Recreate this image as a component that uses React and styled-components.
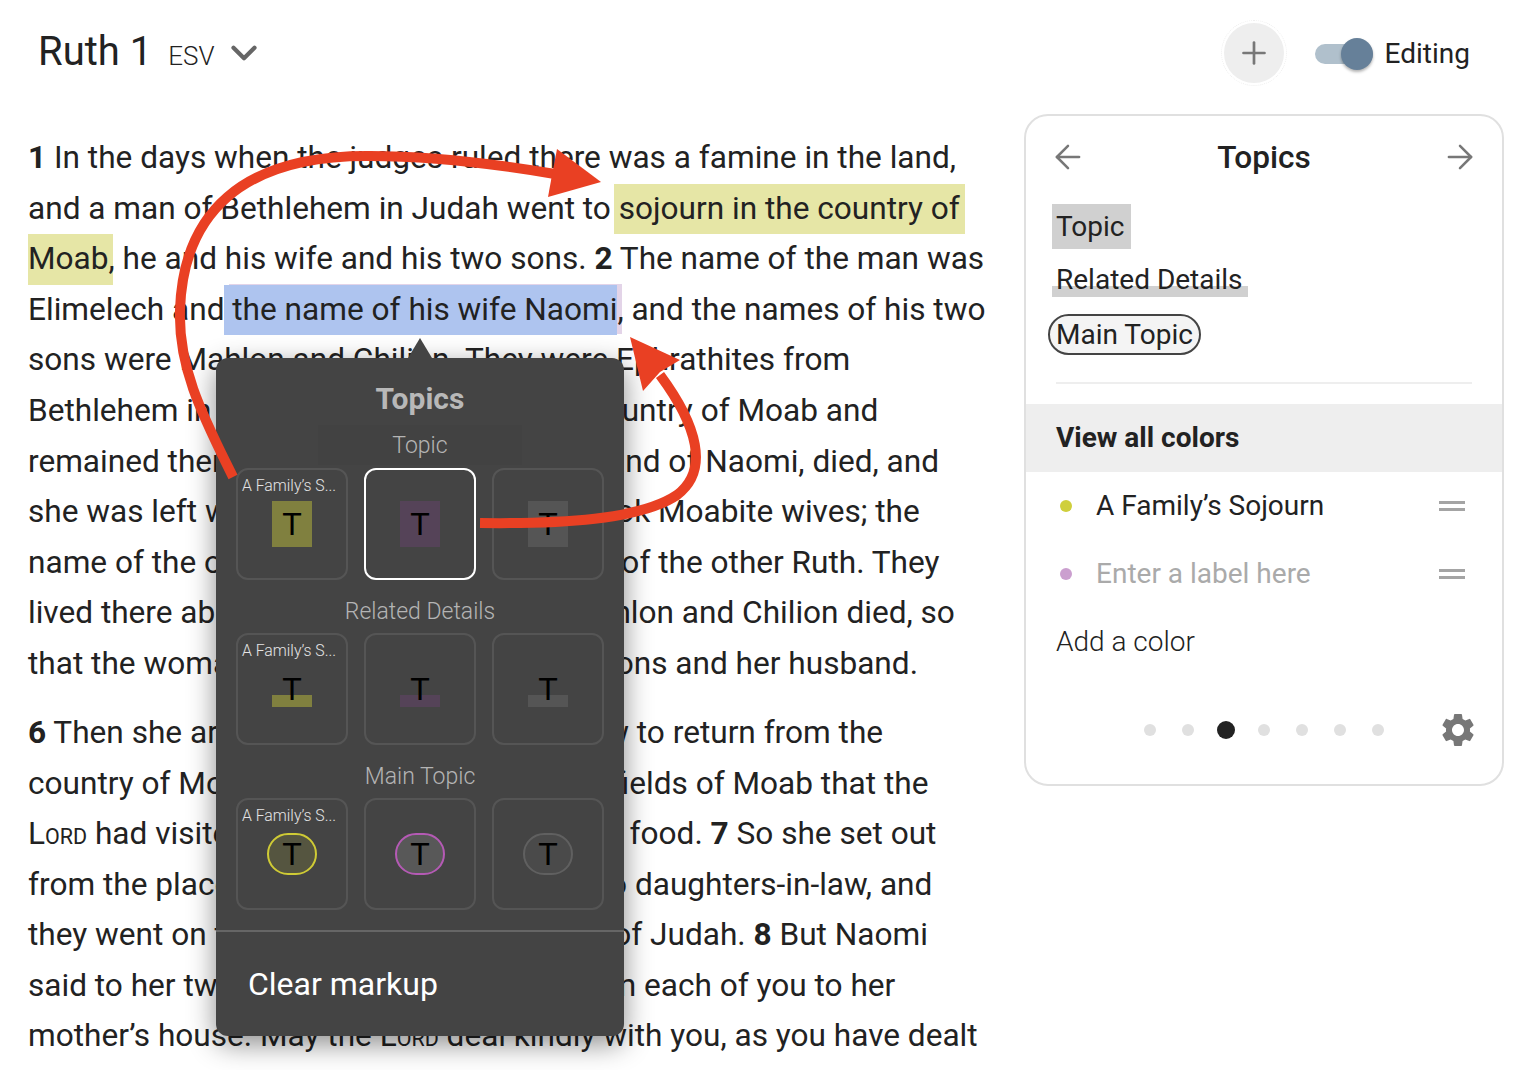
import React from 'react'
import styled, { createGlobalStyle } from 'styled-components'
import { ArrowLeft, ArrowRight, ChevronDown, Plus } from 'lucide-react'
import { MdSettings } from 'react-icons/md'

const GlobalStyle = createGlobalStyle`
  html, body {
    margin: 0;
    padding: 0;
    background: #fff;
  }
  body {
    font-family: Roboto, "Liberation Sans", sans-serif;
    color: #222;
  }
`

const Page = styled.div`
  position: relative;
  width: 1524px;
  height: 1070px;
  overflow: hidden;
`

const Header = styled.header`
  display: flex;
  align-items: center;
  justify-content: space-between;
  height: 105px;
  padding: 0 54px 0 38px;
  box-sizing: border-box;
`

const TitleGroup = styled.div`
  display: flex;
  align-items: baseline;
`

const Title = styled.h1`
  margin: 0;
  font-size: 40px;
  font-weight: 400;
  line-height: 1;
`

const Version = styled.span`
  margin-left: 16px;
  font-size: 26px;
  font-weight: 300;
`

const Chevron = styled(ChevronDown)`
  margin-left: 9px;
  align-self: center;
  color: #666;
`

const HeaderActions = styled.div`
  display: flex;
  align-items: center;
`

const AddButton = styled.button`
  display: flex;
  align-items: center;
  justify-content: center;
  width: 60px;
  height: 60px;
  margin-right: 31px;
  padding: 0;
  border: 0;
  border-radius: 50%;
  background: #eee;
  color: #777;
  outline: 1px dotted #eee;
  outline-offset: 2px;
`

const Toggle = styled.div`
  display: flex;
  align-items: center;
  width: 58px;
  height: 20px;
  border-radius: 10px;
  background: #b0c0cc;
  margin-top: 3px;
`

const Knob = styled.div`
  width: 32px;
  height: 32px;
  margin-left: 26px;
  border-radius: 50%;
  background: #668099;
  box-shadow: 0 2px 3px rgba(0, 0, 0, 0.3);
`

const ToggleLabel = styled.span`
  margin-left: 12px;
  padding-top: 2px;
  font-size: 28px;
`

const Body = styled.main`
  display: flex;
  align-items: flex-start;
`

const Reading = styled.section`
  position: relative;
  width: 1024px;
  padding: 28px 0 0 28px;
  box-sizing: border-box;
  font-size: 31.6px;
`

const Verse = styled.p`
  margin: 0 0 18.4px;
  white-space: nowrap;
`

const Line = styled.span`
  display: block;
  line-height: 50.6px;
  height: 50.6px;
`

const Mark = styled.span`
  display: inline-block;
  padding: 0 ${p => p.$right}px 0 ${p => p.$left}px;
  margin: 0 -${p => p.$right}px 0 -${p => p.$left}px;
  background: ${p => p.$color};
  box-shadow: ${p => p.$shadow || 'none'};
`

const SmallCaps = styled.span`
  font-size: 0.68em;
`

const Lord = () => <span>L<SmallCaps>ORD</SmallCaps></span>

const Popover = styled.div`
  position: absolute;
  top: 253px;
  left: 216px;
  width: 408px;
  height: 678px;
  display: flex;
  flex-direction: column;
  border-radius: 12px;
  background: #444;
  box-shadow: 0 8px 28px rgba(0, 0, 0, 0.45);

  &::before {
    content: '';
    position: absolute;
    top: -20px;
    left: 192px;
    border-left: 12px solid transparent;
    border-right: 12px solid transparent;
    border-bottom: 20px solid #444;
  }
`

const PopoverTitle = styled.h2`
  margin: 21px 0 6px;
  font-size: 30px;
  font-weight: 700;
  line-height: 40px;
  text-align: center;
  color: #b8b8b8;
`

const SectionLabel = styled.div`
  width: ${p => (p.$ghost ? '204px' : 'auto')};
  height: 40px;
  margin: ${p => (p.$ghost ? '0 auto 3px' : '11px 0 2px')};
  background: ${p => (p.$ghost ? '#424242' : 'transparent')};
  font-size: 23px;
  font-weight: 300;
  line-height: 42px;
  text-align: center;
  color: #b4b4b4;
`

const CardRow = styled.div`
  display: grid;
  grid-template-columns: repeat(3, 112px);
  gap: 16px;
  padding: 0 20px;
`

const Card = styled.div`
  display: flex;
  flex-direction: column;
  align-items: center;
  width: 112px;
  height: 112px;
  box-sizing: border-box;
  padding-top: 5px;
  border: 2px solid ${p => (p.$selected ? '#fff' : '#555')};
  border-radius: 12px;
`

const CardLabel = styled.div`
  align-self: flex-start;
  height: 22px;
  margin-bottom: 4px;
  padding-left: 4px;
  font-size: 15.8px;
  font-weight: 300;
  line-height: 22px;
  color: #e4e4e4;
`

const SwatchSlot = styled.div`
  display: flex;
  align-items: center;
  justify-content: center;
  height: 46px;
`

const Swatch = styled.div`
  display: flex;
  align-items: center;
  justify-content: center;
  width: 40px;
  height: 46px;
  background: ${p => p.$color};
  font-family: "Liberation Sans", Arial, sans-serif;
  font-size: 32px;
  color: #000;
`

const BarSwatch = styled(Swatch)`
  background: linear-gradient(${p => p.$color}, ${p => p.$color}) no-repeat 0 29px / 100% 12px;
`

const PillSwatch = styled(Swatch)`
  width: 50px;
  height: 42px;
  box-sizing: border-box;
  border: 2.5px solid ${p => p.$border};
  border-radius: 22px;
`

const PopoverDivider = styled.hr`
  width: 100%;
  height: 2px;
  margin: 20px 0 0;
  border: 0;
  background: #666;
`

const ClearMarkup = styled.div`
  flex: 1;
  display: flex;
  align-items: center;
  padding-left: 32px;
  font-size: 32px;
  color: #fff;
`

const ArrowLayer = styled.svg`
  position: absolute;
  top: 0;
  left: 0;
  pointer-events: none;
`

const Panel = styled.aside`
  width: 480px;
  height: 672px;
  margin-top: 9px;
  box-sizing: border-box;
  display: flex;
  flex-direction: column;
  border: 2px solid #e0e0e0;
  border-radius: 24px;
  font-size: 28px;
`

const PanelHeader = styled.div`
  display: flex;
  align-items: center;
  justify-content: space-between;
  height: 82px;
  padding: 0 23px;
  color: #777;
`

const PanelTitle = styled.h2`
  margin: 0;
  font-size: 31.6px;
  font-weight: 500;
  color: #222;
`

const StyleList = styled.div`
  display: flex;
  flex-direction: column;
  align-items: flex-start;
  height: 184px;
  padding-left: 26px;
`

const TopicSample = styled.div`
  height: 45px;
  margin-top: 6px;
  padding: 0 6px 0 4px;
  background: #d0d0d0;
  line-height: 45px;
`

const DetailsSample = styled.div`
  height: 45px;
  margin-top: 9px;
  padding: 0 5px 0 4px;
  line-height: 44px;
  background: linear-gradient(#d0d0d0, #d0d0d0) no-repeat 0 28px / 100% 11px;
`

const MainSample = styled.div`
  height: 41px;
  margin: 11px 0 0 -4px;
  padding: 0 6px;
  box-sizing: border-box;
  border: 2px solid #444;
  border-radius: 21px;
  background: #f4f4f4;
  line-height: 37px;
`

const PanelDivider = styled.hr`
  width: 416px;
  height: 2px;
  margin: 0 auto 20px;
  border: 0;
  background: #eee;
`

const ViewAll = styled.div`
  display: flex;
  align-items: center;
  height: 68px;
  box-sizing: border-box;
  padding: 0 0 2px 30px;
  background: #eee;
  font-weight: 700;
`

const ColorList = styled.div`
  display: flex;
  flex-direction: column;
`

const ColorRow = styled.div`
  display: flex;
  align-items: center;
  height: 68px;
  padding: 0 37px 0 34px;
  color: ${p => (p.$muted ? '#aaa' : '#222')};
`

const Dot = styled.span`
  width: 12px;
  height: 12px;
  margin-right: 24px;
  border-radius: 50%;
  background: ${p => p.$color};
`

const ColorName = styled.span`
  flex: 1;
  margin-top: -2px;
`

const Handle = styled.span`
  width: 26px;
  height: 4px;
  border-top: 3px solid #a4a4a4;
  border-bottom: 3px solid #a4a4a4;
`

const AddColor = styled.div`
  display: flex;
  align-items: center;
  height: 68px;
  box-sizing: border-box;
  padding: 0 0 2px 30px;
  font-weight: 300;
`

const PagerRow = styled.div`
  display: flex;
  align-items: center;
  justify-content: space-between;
  height: 64px;
  margin-top: 22px;
  padding: 0 24px 0 118px;
  color: #777;
`

const Pager = styled.div`
  display: flex;
  align-items: center;
  gap: 26px;
`

const PagerDot = styled.span`
  width: ${p => (p.$active ? '18px' : '12px')};
  height: ${p => (p.$active ? '18px' : '12px')};
  margin: 0 ${p => (p.$active ? '-3px' : '0')};
  border-radius: 50%;
  background: ${p => (p.$active ? '#222' : '#e0e0e0')};
`

const swatchColors = ['#80803f', '#554358', '#555']
const pillStyles = [
  { color: '#555540', border: '#cfcb35' },
  { color: '#585858', border: '#b55ab5' },
  { color: '#4a4a4a', border: '#606060' }
]
const labelFor = i => (i === 0 ? 'A Family’s S...' : '')

const App = () => {
  return (
    <Page>
      <GlobalStyle />
      <Header>
        <TitleGroup>
          <Title>Ruth 1</Title>
          <Version>ESV</Version>
          <Chevron size={42} strokeWidth={2.4} />
        </TitleGroup>
        <HeaderActions>
          <AddButton>
            <Plus size={36} strokeWidth={1.8} />
          </AddButton>
          <Toggle>
            <Knob />
          </Toggle>
          <ToggleLabel>Editing</ToggleLabel>
        </HeaderActions>
      </Header>

      <Body>
        <Reading>
          <Verse>
            <Line><b>1</b> In the days when the judges ruled there was a famine in the land,</Line>
            <Line>and a man of Bethlehem in Judah went to <Mark $color="#e6e6a6" $left={5} $right={5}>sojourn in the country of</Mark></Line>
            <Line><Mark $color="#e6e6a6" $left={0} $right={4}>Moab</Mark>, he and his wife and his two sons. <b>2</b> The name of the man was</Line>
            <Line>Elimelech and <Mark $color="#aec4ef" $left={8} $right={0} $shadow="5px -1px 0 #e3d4e8">the name of his wife Naomi</Mark>, and the names of his two</Line>
            <Line>sons were Mahlon and Chilion. They were Ephrathites from</Line>
            <Line>Bethlehem in Judah. They went into the country of Moab and</Line>
            <Line>remained there. <b>3</b> But Elimelech, the husband of Naomi, died, and</Line>
            <Line>she was left with her two sons. <b>4</b> These took Moabite wives; the</Line>
            <Line>name of the one was Orpah and the name of the other Ruth. They</Line>
            <Line>lived there about ten years, <b>5</b> and both Mahlon and Chilion died, so</Line>
            <Line>that the woman was left without her two sons and her husband.</Line>
          </Verse>
          <Verse>
            <Line><b>6</b> Then she arose with her daughters-in-law to return from the</Line>
            <Line>country of Moab, for she had heard in the fields of Moab that the</Line>
            <Line><Lord /> had visited his people and given them food. <b>7</b> So she set out</Line>
            <Line>from the place where she was with her two daughters-in-law, and</Line>
            <Line>they went on the way to return to the land of Judah. <b>8</b> But Naomi</Line>
            <Line>said to her two daughters-in-law, “Go, return each of you to her</Line>
            <Line>mother’s house. May the <Lord /> deal kindly with you, as you have dealt</Line>
          </Verse>

          <Popover>
            <PopoverTitle>Topics</PopoverTitle>
            <SectionLabel $ghost>Topic</SectionLabel>
            <CardRow>
              {swatchColors.map((color, i) => (
                <Card key={color} $selected={i === 1}>
                  <CardLabel>{labelFor(i)}</CardLabel>
                  <SwatchSlot><Swatch $color={color}>T</Swatch></SwatchSlot>
                </Card>
              ))}
            </CardRow>
            <SectionLabel>Related Details</SectionLabel>
            <CardRow>
              {swatchColors.map((color, i) => (
                <Card key={color}>
                  <CardLabel>{labelFor(i)}</CardLabel>
                  <SwatchSlot><BarSwatch $color={color}>T</BarSwatch></SwatchSlot>
                </Card>
              ))}
            </CardRow>
            <SectionLabel>Main Topic</SectionLabel>
            <CardRow>
              {pillStyles.map((pill, i) => (
                <Card key={pill.border}>
                  <CardLabel>{labelFor(i)}</CardLabel>
                  <SwatchSlot><PillSwatch $color={pill.color} $border={pill.border}>T</PillSwatch></SwatchSlot>
                </Card>
              ))}
            </CardRow>
            <PopoverDivider />
            <ClearMarkup>Clear markup</ClearMarkup>
          </Popover>
        </Reading>

        <Panel>
          <PanelHeader>
            <ArrowLeft size={38} strokeWidth={1.6} />
            <PanelTitle>Topics</PanelTitle>
            <ArrowRight size={38} strokeWidth={1.6} />
          </PanelHeader>
          <StyleList>
            <TopicSample>Topic</TopicSample>
            <DetailsSample>Related Details</DetailsSample>
            <MainSample>Main Topic</MainSample>
          </StyleList>
          <PanelDivider />
          <ViewAll>View all colors</ViewAll>
          <ColorList>
            <ColorRow>
              <Dot $color="#cfcf3c" />
              <ColorName>A Family’s Sojourn</ColorName>
              <Handle />
            </ColorRow>
            <ColorRow $muted>
              <Dot $color="#cb9fcf" />
              <ColorName>Enter a label here</ColorName>
              <Handle />
            </ColorRow>
          </ColorList>
          <AddColor>Add a color</AddColor>
          <PagerRow>
            <Pager>
              {[0, 1, 2, 3, 4, 5, 6].map(i => (
                <PagerDot key={i} $active={i === 2} />
              ))}
            </Pager>
            <MdSettings size={40} />
          </PagerRow>
        </Panel>
      </Body>

      <ArrowLayer width="1524" height="1070" viewBox="0 0 1524 1070">
        <path d="M233 477 C205 420 178 370 180 310 C183 215 240 155 370 156 C430 156 490 163 555 174" fill="none" stroke="#e94023" strokeWidth="10" />
        <polygon points="601,182 557,149 552,175 548,197" fill="#e94023" />
        <path d="M480 523 C560 524 640 520 677 495 C710 470 697 425 660 375" fill="none" stroke="#e94023" strokeWidth="10" />
        <polygon points="630,337 680,360 660,372 643,391" fill="#e94023" />
      </ArrowLayer>
    </Page>
  )
}

export default App
